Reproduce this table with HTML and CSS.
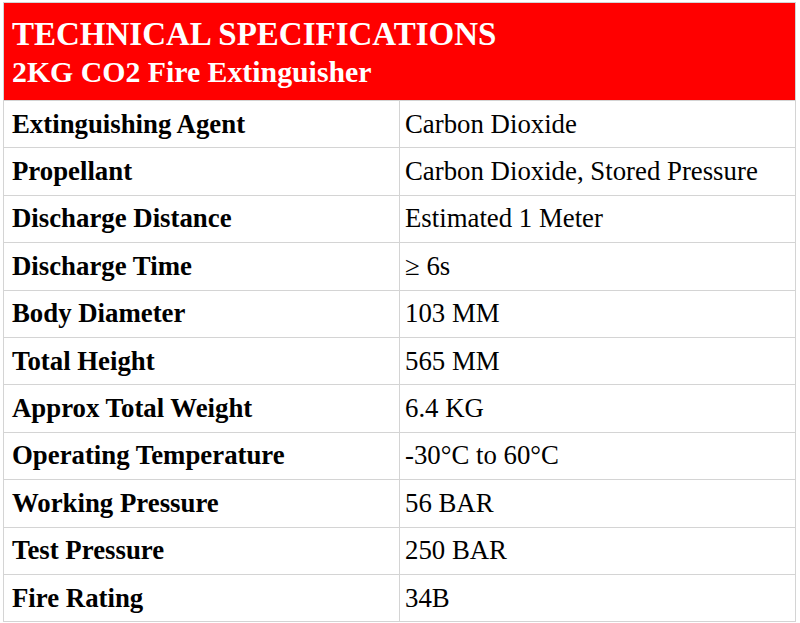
FILE: index.html
```html
<!DOCTYPE html>
<html lang="en">
<head>
<meta charset="utf-8">
<title>Technical Specifications</title>
<link rel="stylesheet" href="styles.css">
</head>
<body>
<div class="sheet">
  <div class="head">
    <div class="title">TECHNICAL SPECIFICATIONS</div>
    <div class="subtitle">2KG CO2 Fire Extinguisher</div>
  </div>
  <div class="row"><div class="key">Extinguishing Agent</div><div class="val">Carbon Dioxide</div></div>
  <div class="row"><div class="key">Propellant</div><div class="val">Carbon Dioxide, Stored Pressure</div></div>
  <div class="row"><div class="key">Discharge Distance</div><div class="val">Estimated 1 Meter</div></div>
  <div class="row"><div class="key">Discharge Time</div><div class="val">≥ 6s</div></div>
  <div class="row"><div class="key">Body Diameter</div><div class="val">103 MM</div></div>
  <div class="row"><div class="key">Total Height</div><div class="val">565 MM</div></div>
  <div class="row"><div class="key">Approx Total Weight</div><div class="val">6.4 KG</div></div>
  <div class="row"><div class="key">Operating Temperature</div><div class="val">-30°C to 60°C</div></div>
  <div class="row"><div class="key">Working Pressure</div><div class="val">56 BAR</div></div>
  <div class="row"><div class="key">Test Pressure</div><div class="val">250 BAR</div></div>
  <div class="row"><div class="key">Fire Rating</div><div class="val">34B</div></div>
</div>
</body>
</html>
```
FILE: styles.css
```css
html, body {
  margin: 0;
  padding: 0;
  background: #ffffff;
}
body {
  font-family: "Liberation Serif", "Times New Roman", serif;
  color: #000000;
  overflow: hidden;
}
.sheet {
  margin: 2px 0 0 3px;
  width: 793px;
  box-sizing: border-box;
  border-top: 1px solid #d4d4d4;
  border-left: 1px solid #d4d4d4;
  border-right: 1px solid #d4d4d4;
}
.head {
  box-sizing: border-box;
  height: 98px;
  background: #ff0000;
  border-bottom: 1px solid #d4d4d4;
  color: #ffffff;
  font-weight: bold;
  padding: 12px 0 0 8px;
}
.title {
  font-size: 33px;
  line-height: 38px;
}
.subtitle {
  font-size: 29.8px;
  line-height: 38px;
}
.row {
  box-sizing: border-box;
  height: 47.4px;
  display: grid;
  grid-template-columns: 396px 1fr;
  border-bottom: 1px solid #d4d4d4;
  font-size: 26.8px;
}
.key {
  font-weight: bold;
  padding-left: 8px;
  border-right: 1px solid #d4d4d4;
  display: flex;
  align-items: center;
}
.val {
  padding-left: 5px;
  display: flex;
  align-items: center;
}
```
